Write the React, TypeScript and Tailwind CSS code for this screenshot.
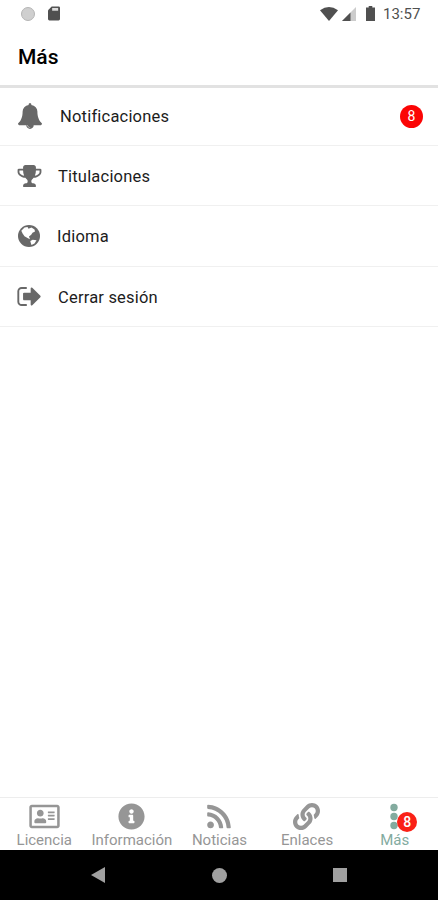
import type { ReactNode } from "react";
import { FaInfoCircle, FaRegAddressCard, FaRss, FaLink } from "react-icons/fa";

const rows: { label: string; height: string; gap: string; nudge: string; icon: ReactNode; badge?: number }[] = [
  {
    label: "Notificaciones",
    height: "h-[57px]",
    gap: "w-[42px] pb-0.5",
    nudge: "",
    badge: 8,
    icon: (
      <svg className="h-[26px] w-6" viewBox="64 0 1664 1792" fill="currentColor">
        <path d="M912 1696q0-16-16-16-59 0-101.500-42.500t-42.500-101.500q0-16-16-16t-16 16q0 73 51.500 124.500t124.500 51.500q16 0 16-16zm816-288q0 52-38 90t-90 38h-448q0 106-75 181t-181 75-181-75-75-181h-448q-52 0-90-38t-38-90q50-42 91-88t85-119.500 74.500-158.500 50-206 19.500-260q0-152 117-282.500t307-158.500q-8-19-8-39 0-40 28-68t68-28 68 28 28 68q0 20-8 39 190 28 307 158.500t117 282.500q0 139 19.500 260t50 206 74.500 158.500 85 119.500 91 88z" />
      </svg>
    ),
  },
  {
    label: "Titulaciones",
    height: "h-[60px]",
    gap: "w-10",
    nudge: "pt-[3px]",
    icon: (
      <svg className="-ml-px h-[22px] w-[25px]" viewBox="64 128 1664 1536" fill="currentColor">
        <path d="M522 883q-74-162-74-371h-256v96q0 78 94.500 162t235.500 113zm1078-275v-96h-256q0 209-74 371 141-29 235.500-113t94.500-162zm128-128v128q0 71-41.500 143t-112 130-173 97.500-215.500 44.500q-42 54-95 95-38 34-52.500 72.500t-14.500 89.500q0 54 30.500 91t97.500 37q75 0 133.500 45.500t58.500 114.500v64q0 14-9 23t-23 9h-832q-14 0-23-9t-9-23v-64q0-69 58.500-114.500t133.500-45.500q67 0 97.500-37t30.500-91q0-51-14.500-89.500t-52.500-72.500q-53-41-95-95-113-5-215.500-44.500t-173-97.500-112-130-41.500-143v-128q0-40 28-68t68-28h288v-96q0-66 47-113t113-47h576q66 0 113 47t47 113v96h288q40 0 68 28t28 68z" />
      </svg>
    ),
  },
  {
    label: "Idioma",
    height: "h-[61px]",
    gap: "w-[39px]",
    nudge: "pt-0.5",
    icon: (
      <svg className="h-[22px] w-[22px]" viewBox="0 0 22 22">
        <circle cx="11" cy="11" r="11" fill="currentColor" />
        <path d="M3.300 5.800 6.500 2.600 9.500 2 10.500 3.800 13.500 2.400 16.500 4.500 17 6.500 14.500 7.800 13.200 9.800 11 11.500 12 14.200 9.500 13 6.500 11.200 4.600 8.500Z" fill="white" />
        <path d="m12.300 16 2.400-1.300 3.800.6-2 3.200-3 1.500-.7-2Z" fill="white" />
      </svg>
    ),
  },
  {
    label: "Cerrar sesión",
    height: "h-[60px]",
    gap: "w-10",
    nudge: "pt-[3px]",
    icon: (
      <svg className="-ml-px h-[19px] w-6" viewBox="64 256 1568 1280" fill="currentColor">
        <path d="M704 1440q0 4 1 20t.5 26.500-3 23.500-10 19.500-20.500 6.500h-320q-119 0-203.500-84.500t-84.500-203.500v-704q0-119 84.500-203.500t203.500-84.500h320q13 0 22.500 9.500t9.500 22.500q0 4 1 20t.5 26.500-3 23.500-10 19.500-20.500 6.500h-320q-66 0-113 47t-47 113v704q0 66 47 113t113 47h312l11.500 1 11.500 3 8 5.500 7 9 2 13.500zm928-544q0 26-19 45l-544 544q-19 19-45 19t-45-19-19-45v-288h-448q-26 0-45-19t-19-45v-384q0-26 19-45t45-19h448v-288q0-26 19-45t45-19 45 19l544 544q19 19 19 45z" />
      </svg>
    ),
  },
];

const tabs: { label: string; icon: ReactNode; active?: boolean }[] = [
  { label: "Licencia", icon: <FaRegAddressCard className="ml-px h-[27px] w-[31px]" /> },
  { label: "Información", icon: <FaInfoCircle className="h-[27px] w-[27px]" /> },
  { label: "Noticias", icon: <FaRss className="h-[27px] w-6" /> },
  { label: "Enlaces", icon: <FaLink className="h-[27px] w-[27px]" /> },
  {
    label: "Más",
    active: true,
    icon: (
      <svg className="h-[27px] w-2" viewBox="0 0 8 27" fill="currentColor">
        <circle cx="4" cy="4.500" r="3.700" />
        <circle cx="4" cy="13.500" r="3.700" />
        <circle cx="4" cy="22.500" r="3.700" />
      </svg>
    ),
  },
];

function StatusBar() {
  return (
    <div className="flex h-[27px] items-center pl-[21px] pr-[17px] text-[#505050]">
      <span className="h-[14px] w-[14px] rounded-full border border-[#b5b5b5] bg-[#cfcfcf]" />
      <svg className="ml-[13px] h-[15px] w-[12px]" viewBox="0 0 13 15">
        <path d="M4 0h7.500Q13 0 13 1.500v12q0 1.500-1.500 1.500h-10Q0 15 0 13.500V4Z" fill="currentColor" />
        <path d="M4.500 1.500h6.500v3H4.500z" fill="#dddddd" />
      </svg>
      <svg className="ml-auto h-[14px] w-[18px]" viewBox="0 0 18 14">
        <path d="M0 3.200Q9-3.200 18 3.200L9 14Z" fill="currentColor" />
      </svg>
      <svg className="ml-1 h-[14px] w-[14px]" viewBox="0 0 14 14">
        <path d="M14 0v14H0Z" fill="#cccccc" />
        <path d="M8.500 5.500V14H0Z" fill="currentColor" />
      </svg>
      <svg className="ml-[10px] h-[15px] w-[9px]" viewBox="0 0 9 15">
        <path d="M2.700 0h3.600v1.500H9V15H0V1.500h2.700z" fill="currentColor" />
      </svg>
      <span className="ml-2 w-[38px] pt-0.5 text-[15px] leading-none">13:57</span>
    </div>
  );
}

export default function App() {
  return (
    <div className="flex h-[900px] w-[438px] flex-col overflow-hidden bg-white font-[Roboto,sans-serif] text-[#1c1c1c]">
      <StatusBar />
      <header className="flex h-[61px] items-center border-b-[3px] border-[#e2e2e2] pl-[18px] pt-[3px] text-[21px] font-medium text-black">
        <h1>Más</h1>
      </header>
      <main className="flex-1 pt-px">
        {rows.map((row) => (
          <div key={row.label} className={`${row.height} flex items-center border-b border-[#f0f0f0] pl-[18px] pr-[15px] text-[16.500px]`}>
            <span className={`${row.gap} shrink-0 text-[#686868]`}>{row.icon}</span>
            <span className={`${row.nudge} tracking-[0.2px]`}>{row.label}</span>
            {row.badge && (
              <span className="mb-0.5 ml-auto flex h-[23px] w-[23px] items-center justify-center rounded-full bg-[#fb0505] text-sm text-white">
                {row.badge}
              </span>
            )}
          </div>
        ))}
      </main>
      <nav className="grid h-[53px] grid-cols-5 border-t border-[#ededed] pt-[5px]">
        {tabs.map((tab) => (
          <div key={tab.label} className={`flex flex-col items-center ${tab.active ? "text-[#83ab9f]" : "text-[#969696]"}`}>
            <div className="relative">
              {tab.icon}
              {tab.active && (
                <span className="absolute left-[7px] top-[9px] flex h-5 w-5 items-center justify-center rounded-full bg-[#fa2117] text-sm font-medium text-white">
                  8
                </span>
              )}
            </div>
            <span className="pl-px text-[15px] leading-5">{tab.label}</span>
          </div>
        ))}
      </nav>
      <footer className="flex h-[50px] items-center bg-black">
        <svg className="ml-[91px] h-4 w-[14px]" viewBox="0 0 14 16">
          <path d="M14 0v16L0 8Z" fill="#a0a0a0" />
        </svg>
        <span className="ml-[107px] h-[15px] w-[15px] rounded-full bg-[#a0a0a0]" />
        <span className="ml-[106px] h-[14px] w-[14px] bg-[#a0a0a0]" />
      </footer>
    </div>
  );
}
